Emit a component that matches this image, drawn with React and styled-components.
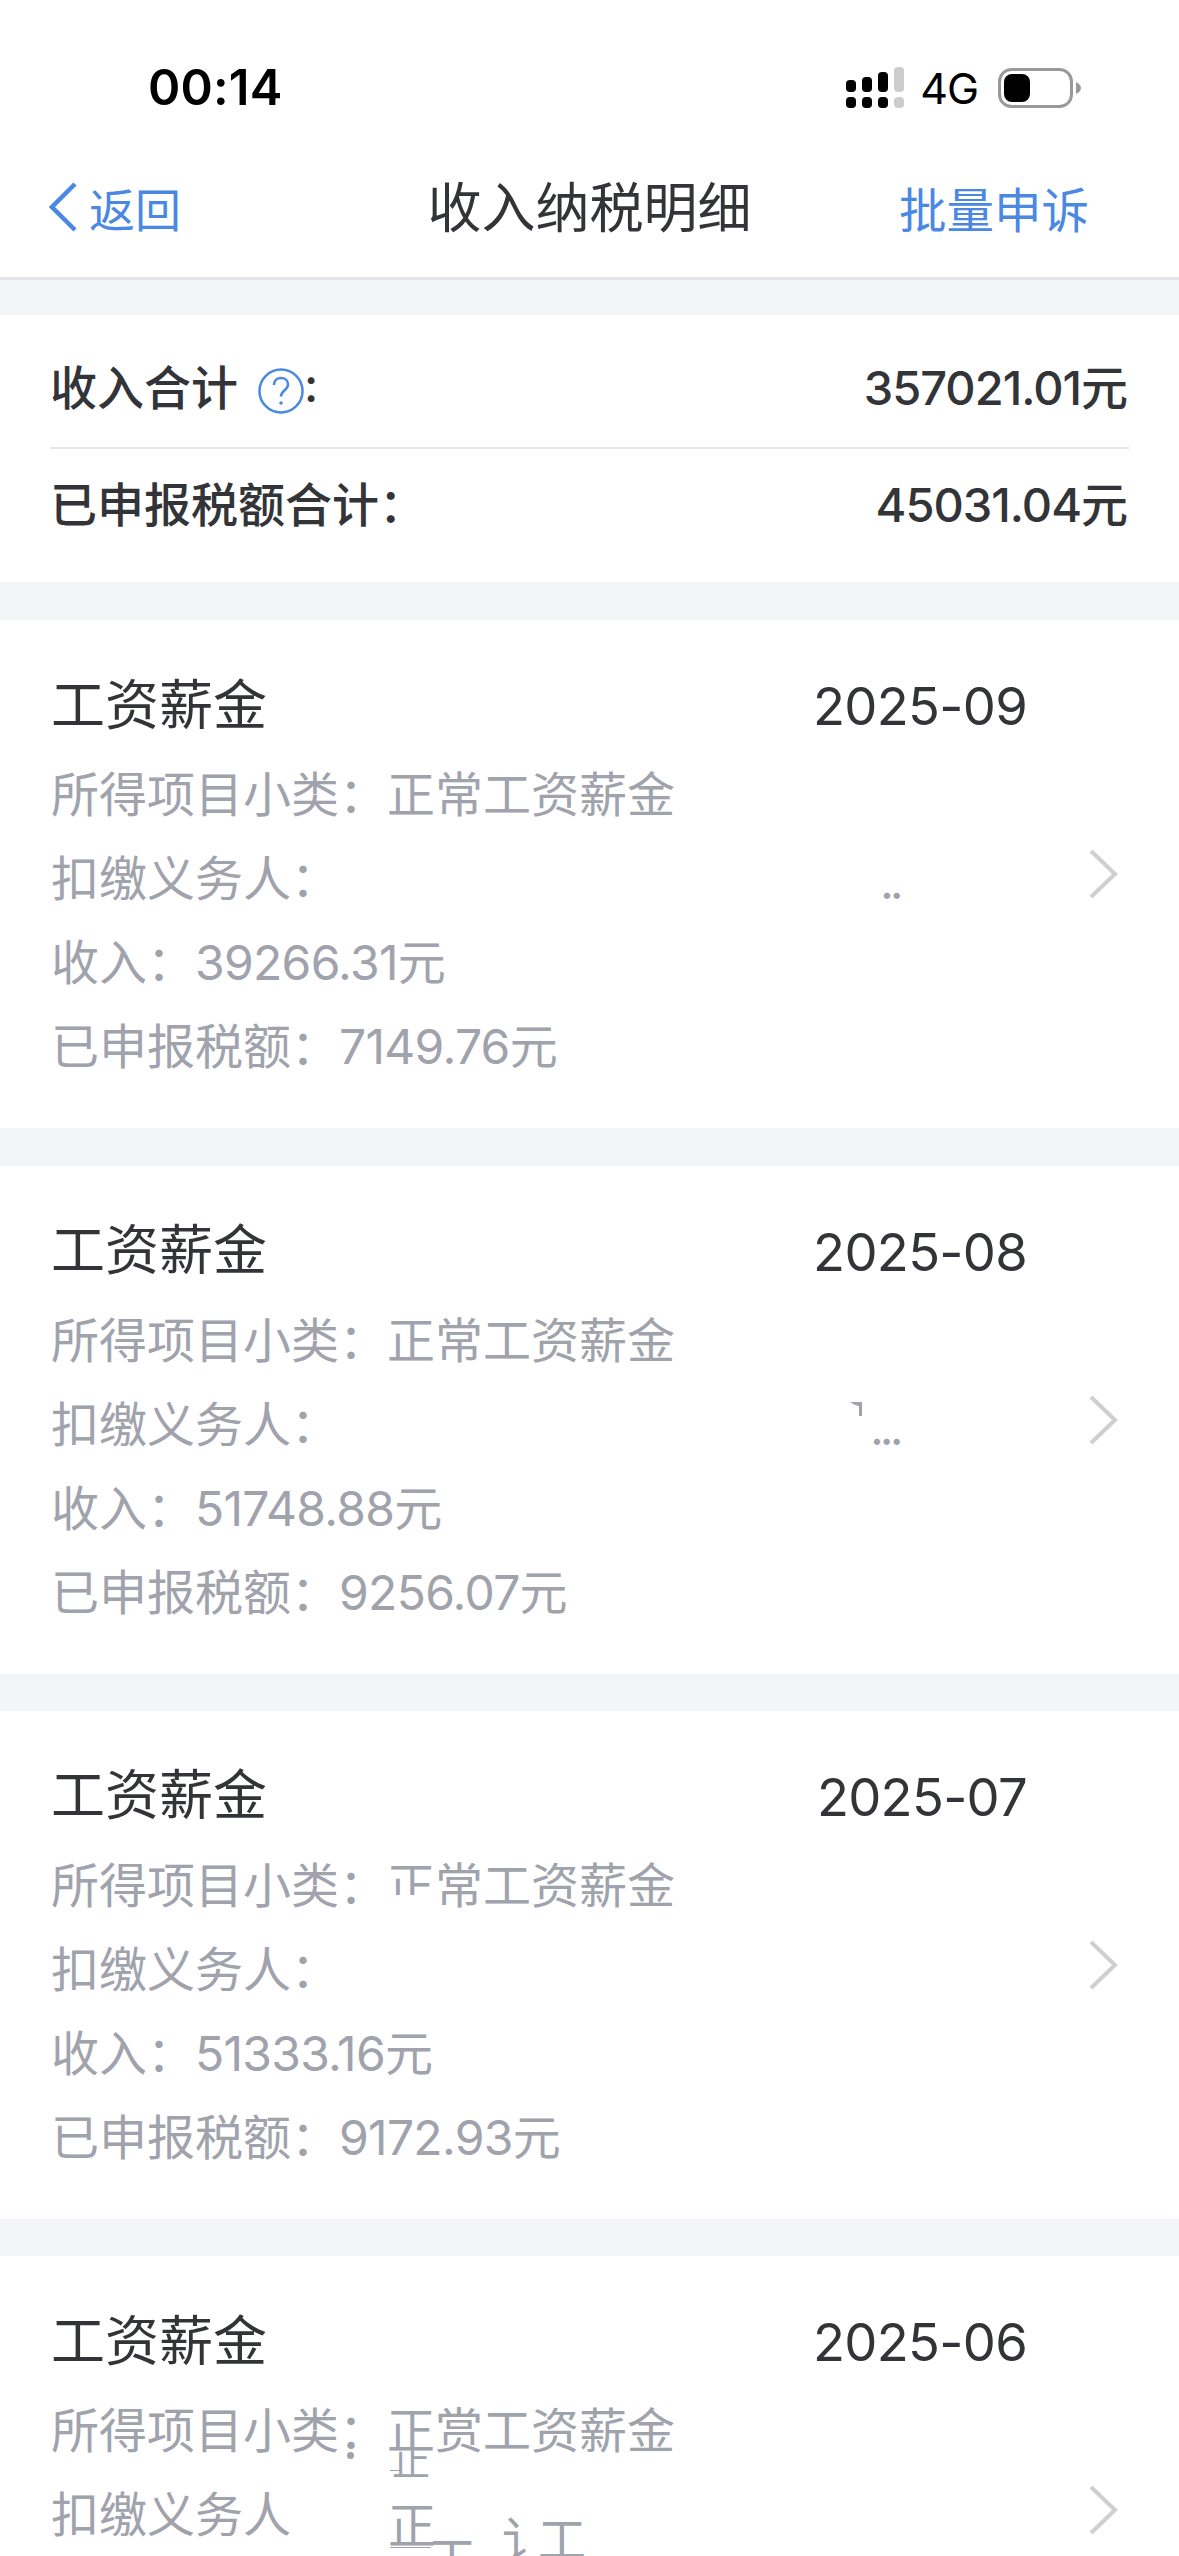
import React from 'react'
import styled, { createGlobalStyle } from 'styled-components'

const FONT = `Inter, "Noto Sans CJK SC", sans-serif`
const BLUE = '#4a88e4'
const DARK = '#333438'
const GRAY = '#a0a2ac'

const GlobalStyle = createGlobalStyle`
  html, body {
    margin: 0;
    padding: 0;
    height: 2556px;
    overflow: hidden;
    background: #f4f5f9;
  }
`

const Page = styled.div`
  width: 1179px;
  height: 2556px;
  overflow: hidden;
  font-family: ${FONT};
  color: ${DARK};
`

const Top = styled.header`
  background: #fff;
  border-bottom: 3px solid #e3e4e9;
  height: 277px;
`

const StatusBar = styled.div`
  height: 148px;
  display: flex;
  align-items: flex-start;
  justify-content: space-between;
  padding: 60px 97px 0 148px;
  box-sizing: border-box;
`

const Clock = styled.span`
  font: 600 49px/56px "Inter", sans-serif;
  color: #000;
  letter-spacing: 0.2px;
`

const StatusIcons = styled.div`
  display: flex;
  align-items: center;
  margin-top: 7px;
`

const Network = styled.span`
  font: 400 43px/40px "Inter", sans-serif;
  color: #000;
  margin: 0 20px 0 16px;
  letter-spacing: -1px;
`

const NavBar = styled.nav`
  display: grid;
  grid-template-columns: 1fr auto 1fr;
  align-items: center;
  height: 118px;
  padding: 0 90px;
`

const BackLink = styled.a`
  display: flex;
  align-items: center;
  gap: 12px;
  margin-left: -41px;
  font-size: 46px;
  color: ${BLUE};
`

const NavTitle = styled.div`
  padding-bottom: 5px;
  font-size: 54px;
  color: ${DARK};
`

const NavAction = styled.a`
  justify-self: end;
  font-size: 47.5px;
  color: ${BLUE};
`

const Content = styled.main`
  display: flex;
  flex-direction: column;
  gap: 37.33px;
  padding-top: 35px;
`

const Summary = styled.section`
  background: #fff;
  height: 267px;
  margin-bottom: 1px;
  padding: 0 50px;
  box-sizing: border-box;
`

const SummaryRow = styled.div`
  display: flex;
  align-items: center;
  justify-content: space-between;
  height: ${props => props.$height}px;
  padding: ${props => props.$top}px 2px ${props => props.$bottom}px 0;
  box-sizing: border-box;
  font-size: 47px;
  font-weight: 500;
  & + & {
    border-top: 2px solid #e6e7eb;
  }
`

const SummaryLabel = styled.span`
  display: flex;
  align-items: center;
`

const SummaryValue = styled.span`
  letter-spacing: -1px;
`

const HelpIcon = styled.svg`
  width: 46px;
  height: 46px;
  margin: 14px 0 0 20px;
`

const Card = styled.article`
  position: relative;
  display: flex;
  align-items: center;
  background: #fff;
  height: 508px;
  flex: none;
  padding: 0 61px 0 51px;
  box-sizing: border-box;
`

const CardBody = styled.div`
  flex: 1;
  align-self: flex-start;
  padding-top: 44px;
`

const CardHeader = styled.div`
  display: flex;
  justify-content: space-between;
  align-items: center;
  height: 84px;
  margin-bottom: 5px;
  color: ${DARK};
`

const CardTitle = styled.span`
  padding-bottom: 10px;
  font-size: 54px;
`

const CardDate = styled.span`
  font-size: 52.5px;
  letter-spacing: -0.7px;
`

const InfoRow = styled.div`
  height: 84px;
  line-height: 84px;
  font-size: 48px;
  color: ${GRAY};
  white-space: nowrap;
`

const Amount = styled.span`
  letter-spacing: -0.7px;
`

const Chevron = styled.svg`
  width: 30px;
  height: 50px;
  margin-left: 61px;
  flex: none;
`

// scan glitches that lie over the rows of the picture
const Fragment = styled.span`
  position: absolute;
  left: ${props => props.$x}px;
  top: ${props => props.$y}px;
  font-size: ${props => props.$size || 48}px;
  line-height: ${props => props.$size || 48}px;
  letter-spacing: ${props => props.$spacing || 0}px;
  color: ${GRAY};
`

const Speck = styled.i`
  position: absolute;
  left: ${props => props.$x}px;
  top: ${props => props.$y}px;
  width: ${props => props.$w}px;
  height: ${props => props.$h}px;
  border-radius: ${props => (props.$round ? '50%' : '0')};
  background: ${props => props.$color || GRAY};
`

const Corner = styled.svg`
  position: absolute;
  left: 850px;
  top: 236px;
  width: 12px;
  height: 14px;
`

const Signal = () => (
  <svg width="58" height="41" viewBox="0 0 58 41">
    <rect x="0" y="13" width="10" height="12" rx="4" />
    <rect x="16" y="10" width="10" height="15" rx="4" />
    <rect x="32" y="5" width="10" height="20" rx="4" />
    <rect x="48" y="0" width="10" height="25" rx="4" fill="#ccc" />
    <rect x="0" y="30" width="10" height="11" rx="4" />
    <rect x="16" y="30" width="10" height="11" rx="4" />
    <rect x="32" y="30" width="10" height="11" rx="4" />
    <rect x="48" y="30" width="10" height="11" rx="4" fill="#ccc" />
  </svg>
)

const Battery = () => (
  <svg width="84" height="40" viewBox="0 0 84 40">
    <rect x="1.5" y="1.5" width="72" height="37" rx="12" fill="none" stroke="#999" strokeWidth="3" />
    <rect x="6" y="6" width="26" height="28" rx="8" fill="#000" />
    <path d="M78 14c3 1.5 5 3.500 5 6s-2 4.500-5 6z" fill="#999" />
  </svg>
)

const CARDS = [
  { date: '2025-09', income: '39266.31', tax: '7149.76' },
  { date: '2025-08', income: '51748.88', tax: '9256.07' },
  { date: '2025-07', income: '51333.16', tax: '9172.93' },
  { date: '2025-06' },
]

const Glitches = ({ date }) => {
  if (date === '2025-09') return <Fragment $x={880} $y={238} $spacing={-4}>..</Fragment>
  if (date === '2025-08') {
    return (
      <>
        <Corner viewBox="0 0 12 14">
          <path d="M0 0h12v14H9V4L5 3z" fill={GRAY} />
        </Corner>
        <Fragment $x={870} $y={238} $spacing={-4}>...</Fragment>
      </>
    )
  }
  if (date === '2025-07') return <Speck $x={389} $y={184} $w={50} $h={20} $color="#fff" />
  return (
    <>
      <Speck $x={347} $y={196} $w={7} $h={7} $round />
      <Fragment $x={392} $y={186} $size={38}>止</Fragment>
      <Speck $x={390} $y={191} $w={41} $h={1} />
      <Speck $x={390} $y={214} $w={12} $h={1} />
      <Fragment $x={388} $y={246}>正</Fragment>
      <Speck $x={390} $y={291} $w={41} $h={1} />
      <Fragment $x={428} $y={279}>工</Fragment>
      <Fragment $x={502} $y={260}>讠</Fragment>
      <Fragment $x={538} $y={260}>工</Fragment>
    </>
  )
}

const App = () => (
  <Page>
    <GlobalStyle />
    <Top>
      <StatusBar>
        <Clock>00:14</Clock>
        <StatusIcons>
          <Signal />
          <Network>4G</Network>
          <Battery />
        </StatusIcons>
      </StatusBar>
      <NavBar>
        <BackLink>
          <svg width="28" height="50" viewBox="0 0 28 50">
            <path d="M26 2 3 25l23 23" fill="none" stroke={BLUE} strokeWidth="4.500" />
          </svg>
          返回
        </BackLink>
        <NavTitle>收入纳税明细</NavTitle>
        <NavAction>批量申诉</NavAction>
      </NavBar>
    </Top>
    <Content>
      <Summary>
        <SummaryRow $height={132} $top={6} $bottom={0}>
          <SummaryLabel>
            收入合计
            <HelpIcon viewBox="0 0 46 46">
              <circle cx="23" cy="23" r="21.500" fill="none" stroke={BLUE} strokeWidth="2.500" />
              <path d="M16 17c0-4.500 3-7 7-7s7 2.500 7 6.500c0 5.500-7 6-7 12" fill="none" stroke={BLUE} strokeWidth="2.500" />
              <circle cx="23" cy="35" r="1.800" fill={BLUE} />
            </HelpIcon>
            :
          </SummaryLabel>
          <SummaryValue>357021.01元</SummaryValue>
        </SummaryRow>
        <SummaryRow $height={117} $top={0} $bottom={10}>
          <span>已申报税额合计：</span>
          <SummaryValue>45031.04元</SummaryValue>
        </SummaryRow>
      </Summary>
      {CARDS.map(card => (
        <Card key={card.date}>
          <CardBody>
            <CardHeader>
              <CardTitle>工资薪金</CardTitle>
              <CardDate>{card.date}</CardDate>
            </CardHeader>
            <InfoRow>所得项目小类：正{card.income ? '常' : '赏'}工资薪金</InfoRow>
            <InfoRow>{card.income ? '扣缴义务人：' : '扣缴义务人'}</InfoRow>
            {card.income && <InfoRow>收入：<Amount>{card.income}</Amount>元</InfoRow>}
            {card.tax && <InfoRow>已申报税额：<Amount>{card.tax}</Amount>元</InfoRow>}
          </CardBody>
          <Chevron viewBox="0 0 30 50">
            <path d="M3 2l24 23L3 48" fill="none" stroke="#cfcfd1" strokeWidth="4" />
          </Chevron>
          <Glitches date={card.date} />
        </Card>
      ))}
    </Content>
  </Page>
)

export default App
